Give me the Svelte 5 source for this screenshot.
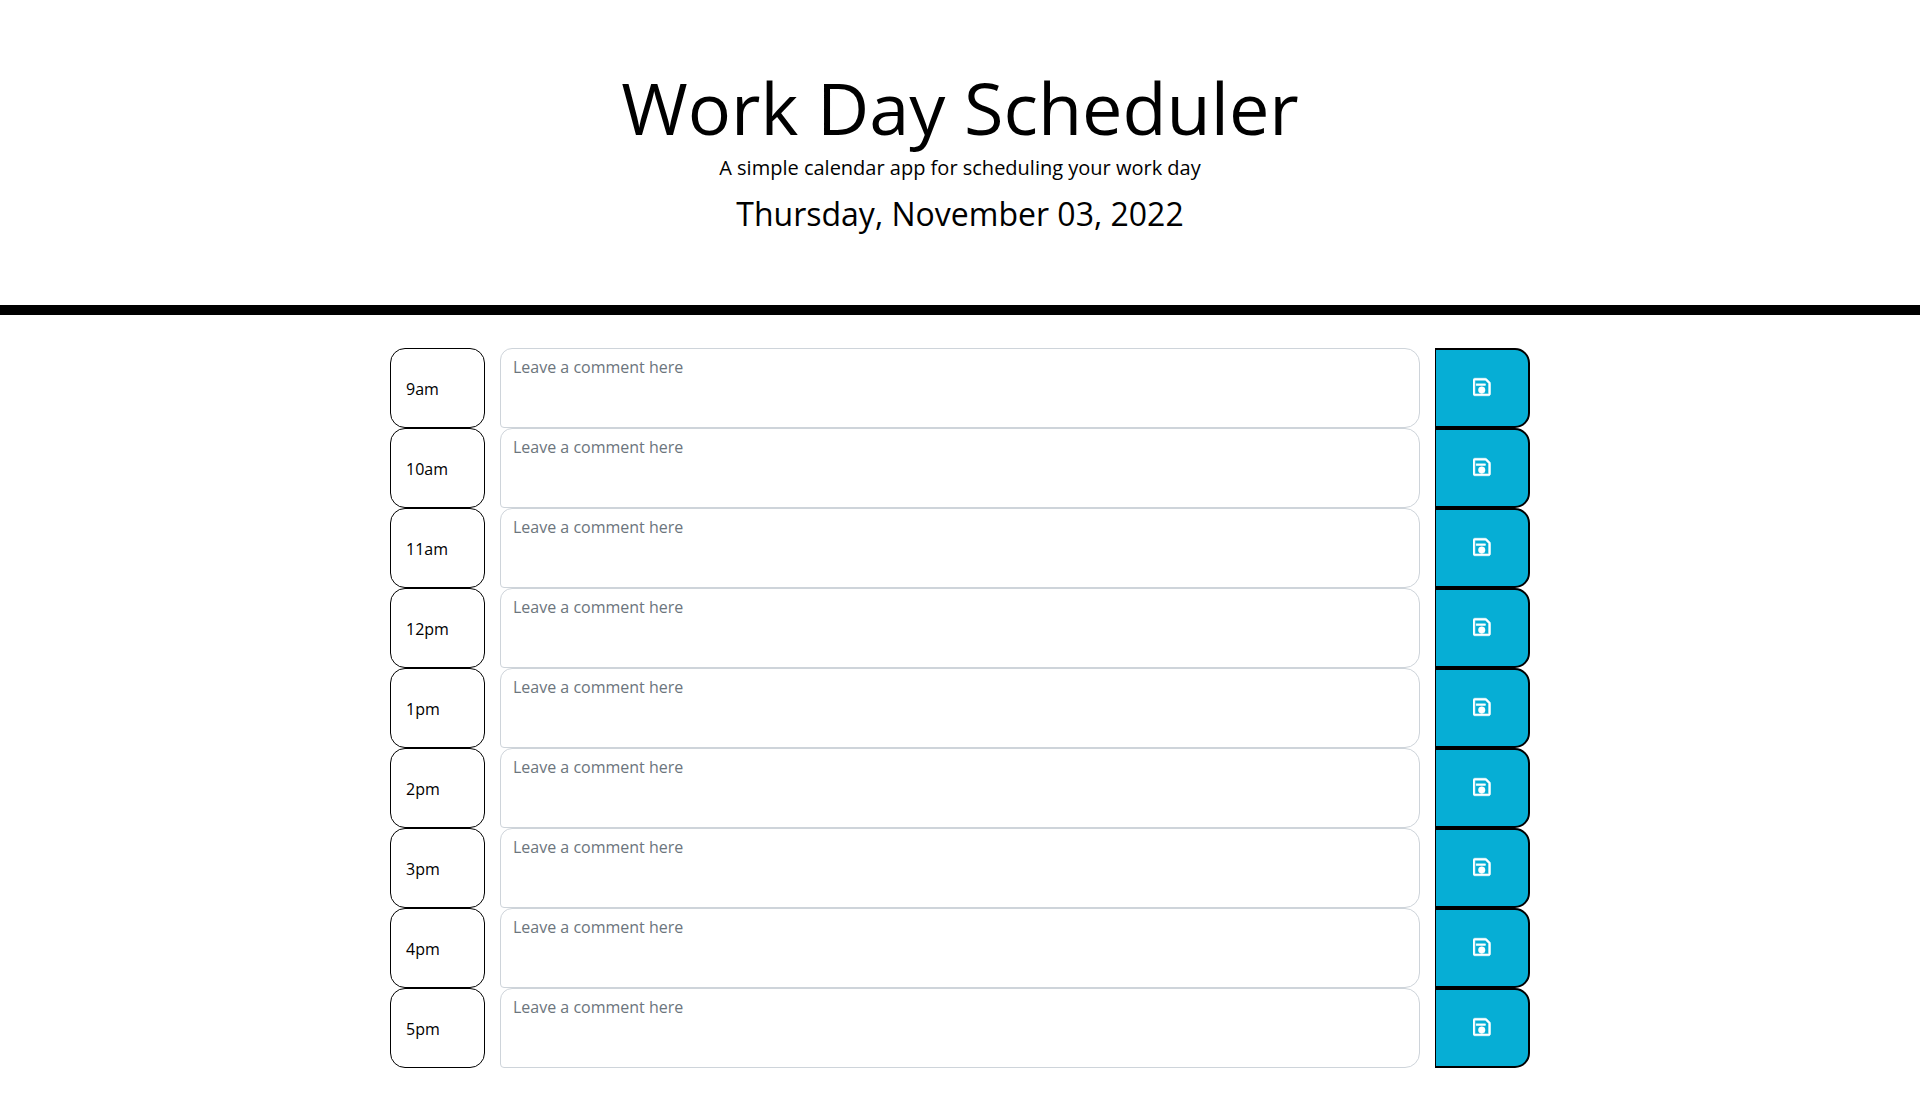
<script>
  const hours = ["9am", "10am", "11am", "12pm", "1pm", "2pm", "3pm", "4pm", "5pm"];
</script>

<header class="jumbotron">
  <h1>Work Day Scheduler</h1>
  <p class="lead">A simple calendar app for scheduling your work day</p>
  <p class="today">Thursday, November 03, 2022</p>
</header>

<main class="container">
  {#each hours as hour}
    <div class="row">
      <div class="hour">{hour}</div>
      <div class="middle">
        <textarea placeholder="Leave a comment here"></textarea>
      </div>
      <button class="save" aria-label="Save {hour}">
        <svg viewBox="0 0 448 512" width="17.5" height="20" fill="currentColor" stroke="currentColor" stroke-width="14">
          <path d="M433.941 129.941l-83.882-83.882A48 48 0 0 0 316.118 32H48C21.49 32 0 53.49 0 80v352c0 26.51 21.49 48 48 48h352c26.51 0 48-21.49 48-48V163.882a48 48 0 0 0-14.059-33.941zM394 432H54a6 6 0 0 1-6-6V86a6 6 0 0 1 6-6h262l78 78a6 6 0 0 1 6 6v262a6 6 0 0 1-6 6z" />
          <rect x="80" y="176" width="240" height="40" />
          <circle cx="224" cy="335" r="85" />
        </svg>
      </button>
    </div>
  {/each}
</main>

<style>
  :global(body) {
    background: #fff;
    color: #000;
    font-family: "Open Sans", sans-serif;
    line-height: 1.5;
  }

  .jumbotron {
    box-sizing: border-box;
    height: 315px;
    padding-top: 64px;
    border-bottom: 10px solid #000;
    text-align: center;
  }

  h1 {
    margin: 0;
    font-size: 72px;
    font-weight: 400;
    line-height: 1.2;
  }

  .lead {
    margin: 3px 0 0;
    font-size: 20px;
    font-weight: 400;
    line-height: 30px;
  }

  .today {
    margin: 7px 0 0;
    font-size: 32px;
    font-weight: 400;
    line-height: 48px;
  }

  .container {
    box-sizing: border-box;
    width: 1140px;
    margin: 33px auto 0;
  }

  .row {
    display: grid;
    grid-template-columns: 95px 950px 95px;
    height: 80px;
  }

  .hour {
    box-sizing: border-box;
    display: flex;
    align-items: center;
    padding: 2px 15px 0;
    border: 1px solid #000;
    border-radius: 15px;
    font-size: 16px;
    line-height: 24px;
    background: #fff;
  }

  .middle {
    padding: 0 15px;
  }

  textarea {
    display: block;
    box-sizing: border-box;
    width: 100%;
    height: 80px;
    padding: 6px 12px;
    border: 1px solid #ced4da;
    border-radius: 12px 15px 15px 4px;
    outline: none;
    resize: none;
    font-family: inherit;
    font-size: 16px;
    line-height: 24px;
    color: #495057;
    background: #fff;
  }

  textarea::placeholder {
    color: #6c757d;
    opacity: 1;
  }

  .save {
    box-sizing: border-box;
    display: flex;
    align-items: center;
    justify-content: center;
    padding: 0 0 2px;
    border: 2px solid #000;
    border-left-width: 1px;
    border-radius: 0 15px 15px 0;
    background: #06aed5;
    color: #fff;
  }
</style>
